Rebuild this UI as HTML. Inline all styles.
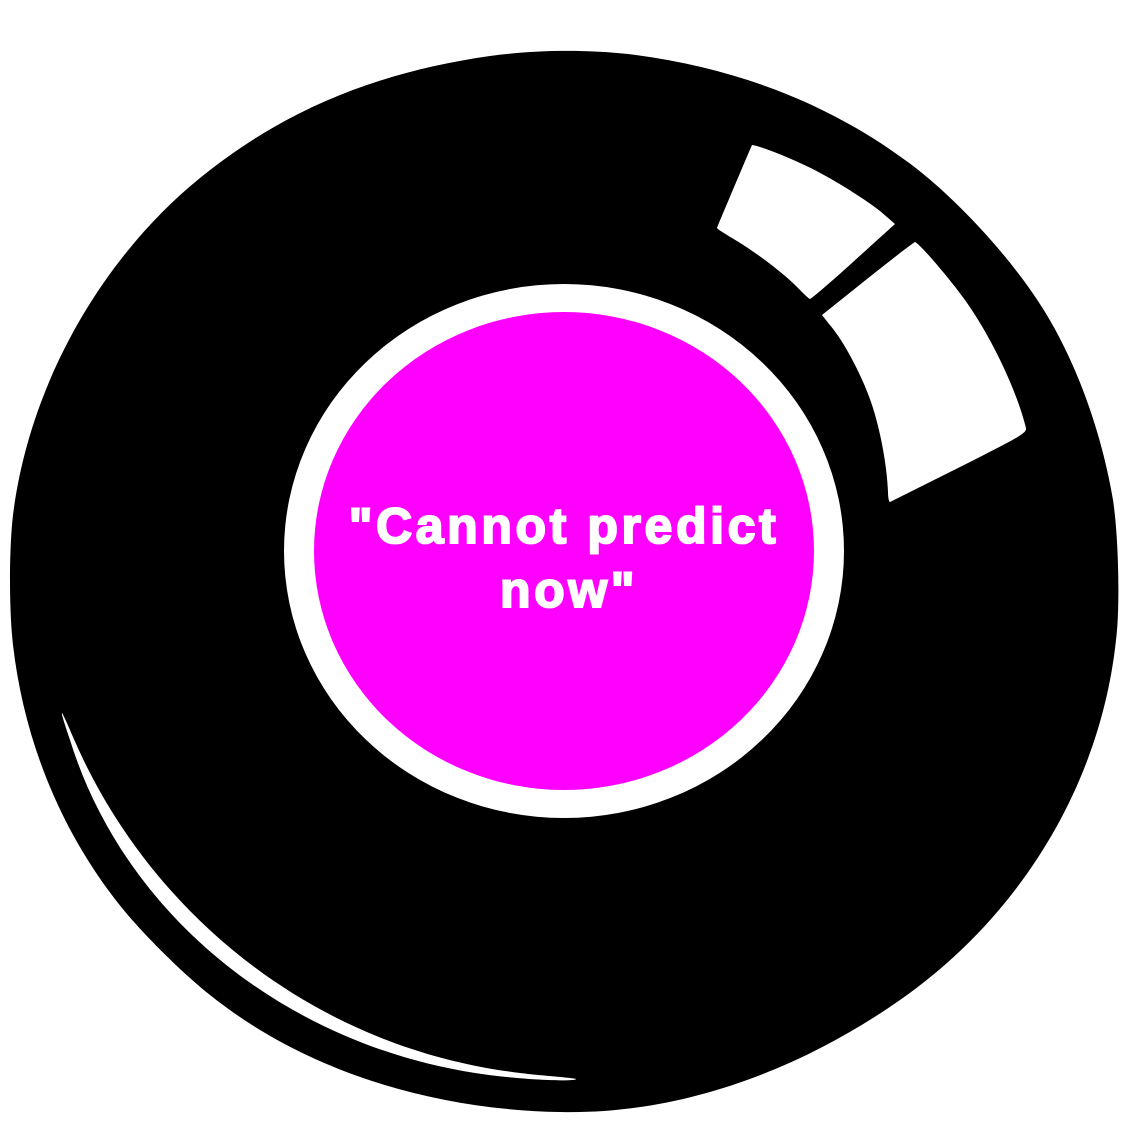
<!DOCTYPE html>
<html><head><style>
html,body{margin:0;padding:0;background:#fff;width:1134px;height:1134px;overflow:hidden}
svg{display:block}
</style></head><body>
<svg width="1134" height="1134" viewBox="0 0 1134 1134" xmlns="http://www.w3.org/2000/svg">
<path d="M490 56 C540 49 590 50 628 54 C740 68 830 105 905 160 C950 192 1010 255 1045 312 C1080 369 1103 440 1113 500 C1119 540 1120 610 1116 640 C1100 790 1015 920 900 1000 C800 1070 680 1115 560 1112 C440 1110 310 1075 210 995 C180 971 140 931 118 903 C60 829 24 740 13 645 C9 610 9 550 13 515 C30 380 105 255 200 178 C285 109 378 72 490 56 Z" fill="#000"/>
<path d="M752 145 C760 146 785 156 800 163 C827 175 862 197 880 211 L895 224 L853 262 C830 283 811 299 810 299 C809 299 803 293 796 286 C782 272 755 252 737 241 C727 235 717 229 717 228 C718 225 751 147 752 145 Z" fill="#fff"/>
<path d="M915 242 C920 244 950 279 965 300 C990 335 1016 388 1026 428 C1027 433 1019 437 970 462 L890 502 C889 502 888 498 888 492 C887 465 880 428 871 402 C862 376 844 341 829 324 L822 315 L867 279 C892 259 913 243 915 242 Z" fill="#fff"/>
<path d="M62 713 C63 714 68 725 73 737 C145 905 305 1047 520 1073 C545 1076 576 1078 576 1079 C576 1082 520 1080 475 1073 C287 1044 125 917 70 740 C64 722 61 713 62 713 Z" fill="#fff"/>
<ellipse cx="564" cy="551" rx="280" ry="267" fill="#fff"/>
<ellipse cx="564" cy="551" rx="250" ry="239" fill="#f0f"/>
<g font-family="Liberation Sans, Arial, sans-serif" font-weight="bold" font-size="50" fill="#fff" stroke="#fff" stroke-width="2" text-anchor="middle" letter-spacing="3.6">
<text x="564" y="543">"Cannot predict</text>
<text x="569" y="607">now"</text>
</g>
</svg>
</body></html>
